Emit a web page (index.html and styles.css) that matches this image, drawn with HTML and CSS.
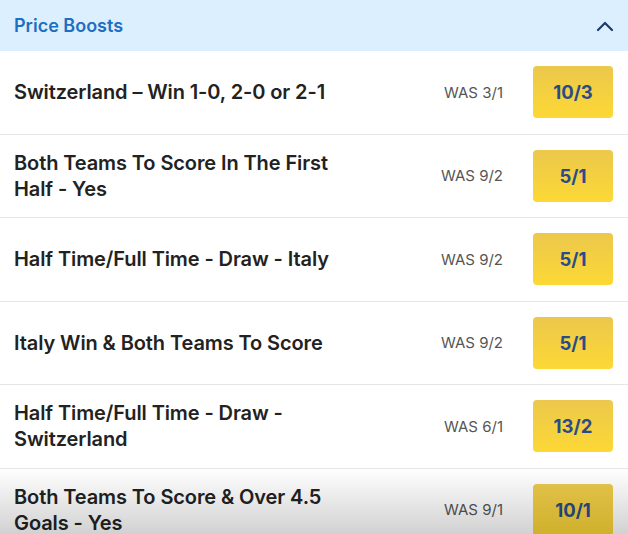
FILE: index.html
```html
<!DOCTYPE html>
<html>
<head>
<meta charset="utf-8">
<link rel="stylesheet" href="styles.css">
</head>
<body>
<div class="panel">
  <div class="header">
    <span class="title">Price Boosts</span>
    <svg class="chev" width="18" height="12" viewBox="0 0 18 12"><path d="M2 10 L9 3 L16 10" fill="none" stroke="#1d3a6b" stroke-width="2.2" stroke-linecap="round" stroke-linejoin="round"/></svg>
  </div>
  <div class="row"><div class="name">Switzerland – Win 1-0, 2-0 or 2-1</div><div class="was">WAS 3/1</div><div class="odds">10/3</div></div>
  <div class="row"><div class="name">Both Teams To Score In The First Half - Yes</div><div class="was">WAS 9/2</div><div class="odds">5/1</div></div>
  <div class="row"><div class="name">Half Time/Full Time - Draw - Italy</div><div class="was">WAS 9/2</div><div class="odds">5/1</div></div>
  <div class="row"><div class="name">Italy Win &amp; Both Teams To Score</div><div class="was">WAS 9/2</div><div class="odds">5/1</div></div>
  <div class="row"><div class="name">Half Time/Full Time - Draw - Switzerland</div><div class="was">WAS 6/1</div><div class="odds">13/2</div></div>
  <div class="row"><div class="name">Both Teams To Score &amp; Over 4.5 Goals - Yes</div><div class="was">WAS 9/1</div><div class="odds">10/1</div></div>
  <div class="shade"></div>
</div>
</body>
</html>
```
FILE: styles.css
```css
html, body { margin: 0; padding: 0; background: #fff; }
body { width: 628px; height: 534px; overflow: hidden; font-family: Inter, "Noto Sans", sans-serif; }
.panel { position: relative; width: 628px; height: 534px; overflow: hidden; }
.header { height: 51px; background: #dcefff; display: flex; align-items: center; justify-content: space-between; padding: 0 14px 0 14px; box-sizing: border-box; }
.title { color: #1f6ebf; font-size: 18px; font-weight: 600; }
.chev { margin-top: 1px; }
.row { height: 82.5px; border-bottom: 1px solid #e6e6e6; display: flex; align-items: center; padding: 0 15px 0 14px; box-sizing: content-box; }
.name { flex: 1; max-width: 330px; font-size: 20px; font-weight: 600; line-height: 26px; color: #222; letter-spacing: -0.1px; }
.was { margin-left: auto; font-size: 15px; color: #555; margin-right: 30px; }
.odds { width: 80px; height: 52px; border-radius: 4px; background: linear-gradient(#ebc84c, #fdd835); display: flex; align-items: center; justify-content: center; color: #2b4b88; font-size: 18.5px; font-weight: 700; }
.shade { position: absolute; left: 0; right: 0; bottom: 0; height: 66px; background: linear-gradient(rgba(0,0,0,0), rgba(0,0,0,0.18)); pointer-events: none; }
```
